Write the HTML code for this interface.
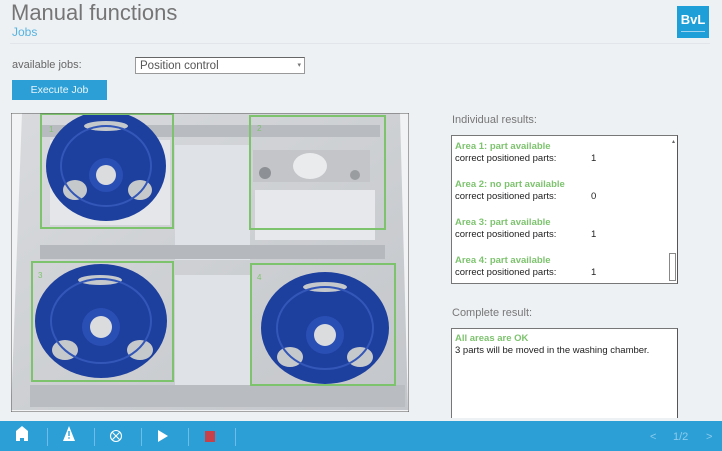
<!DOCTYPE html>
<html><head><meta charset="utf-8"><style>
*{margin:0;padding:0;box-sizing:border-box}
body{width:722px;height:451px;overflow:hidden;background:#eef1f4;font-family:"Liberation Sans",sans-serif;position:relative}
.a{position:absolute}
.t{font-size:22px;color:#757575;left:11px;top:0px}
.j{font-size:12px;color:#56b3e0;left:12px;top:25px}
.hr{left:10px;top:43px;width:700px;height:1px;background:#e2e6ea}
.lbl{font-size:11px;color:#666;}
.sel{left:135px;top:57px;width:170px;height:17px;background:#fff;border:1px solid #999;border-top-color:#666;font-size:11.5px;color:#555;padding:1px 4px;line-height:14px}
.btn{left:12px;top:80px;width:95px;height:20px;background:#2ca0d6;color:#e8f4fb;font-size:10.5px;text-align:center;line-height:20px}
.box{background:#fff;border:1px solid #777;border-right-color:#555;font-size:9.5px;color:#222}
.g{color:#7dc36e;font-weight:bold}
.row{height:12px;line-height:12px;position:relative}
.bar{left:0;top:421px;width:722px;height:30px;background:#2ca0d6}
</style></head><body>
<div class="a t">Manual functions</div>
<div class="a j">Jobs</div>
<div class="a hr"></div>
<div class="a" style="left:677px;top:6px;width:32px;height:32px;background:#1e9fd8;color:#fff;font-weight:bold;font-size:13px;text-align:center;line-height:28px">BvL<div style="position:absolute;left:4px;top:25px;width:24px;height:1px;background:#9fd3ef"></div></div>
<div class="a lbl" style="left:12px;top:59px">available jobs:</div>
<div class="a sel">Position control<span style="position:absolute;right:3px;top:1px;font-size:7px;color:#777">▾</span></div>
<div class="a btn">Execute Job</div>

<svg class="a" style="left:11px;top:113px" width="398" height="299" viewBox="11 113 398 299">
<defs><linearGradient id="m" x1="0" y1="0" x2="1" y2="1"><stop offset="0" stop-color="#d8dadd"/><stop offset="1" stop-color="#c3c6ca"/></linearGradient></defs>
<rect x="11" y="113" width="398" height="299" fill="#f2f3f5"/>
<polygon points="22,113 400,113 408,410 11,410" fill="url(#m)"/>
<rect x="40" y="125" width="340" height="12" fill="#b8bbbf"/>
<rect x="175" y="145" width="75" height="115" fill="#dfe2e6"/>
<rect x="175" y="275" width="75" height="110" fill="#dfe2e6"/>
<rect x="50" y="140" width="120" height="85" fill="#e4e6e9"/>
<rect x="255" y="190" width="120" height="50" fill="#e6e8eb"/>
<rect x="40" y="245" width="345" height="14" fill="#b5b8bc"/>
<rect x="30" y="385" width="375" height="22" fill="#b9bcc0"/>
<rect x="253" y="150" width="117" height="32" fill="#c3c5c8"/>
<circle cx="265" cy="173" r="6" fill="#8d9094"/>
<ellipse cx="310" cy="166" rx="17" ry="13" fill="#e9ebed"/>
<circle cx="355" cy="175" r="5" fill="#9a9da0"/>
<g fill="#1d3f9e">
<ellipse cx="106" cy="166" rx="60" ry="55"/>
<ellipse cx="101" cy="321" rx="66" ry="57"/>
<ellipse cx="325" cy="328" rx="64" ry="56"/>
</g>
<g fill="#c6c9cc">
<ellipse cx="106" cy="126" rx="22" ry="5"/><ellipse cx="75" cy="190" rx="12" ry="10"/><ellipse cx="140" cy="190" rx="12" ry="10"/>
<ellipse cx="100" cy="280" rx="22" ry="5"/><ellipse cx="65" cy="350" rx="13" ry="10"/><ellipse cx="140" cy="350" rx="13" ry="10"/>
<ellipse cx="325" cy="287" rx="22" ry="5"/><ellipse cx="290" cy="357" rx="13" ry="10"/><ellipse cx="360" cy="357" rx="13" ry="10"/>
</g>
<g fill="none" stroke="#3357b8" stroke-width="2"><ellipse cx="106" cy="166" rx="45" ry="40"/><ellipse cx="101" cy="321" rx="50" ry="42"/><ellipse cx="325" cy="328" rx="48" ry="41"/></g>
<g fill="#2a4fb4"><circle cx="106" cy="175" r="17"/><circle cx="101" cy="327" r="19"/><circle cx="325" cy="335" r="19"/></g>
<g fill="#dadcde"><circle cx="106" cy="175" r="10"/><circle cx="101" cy="327" r="11"/><circle cx="325" cy="335" r="11"/></g>
<g fill="none" stroke="#7dc36e" stroke-width="2">
<rect x="41" y="114" width="132" height="114"/>
<rect x="250" y="116" width="135" height="113"/>
<rect x="32" y="262" width="141" height="119"/>
<rect x="251" y="264" width="144" height="121"/>
</g>
<g fill="#7dc36e" font-size="8" font-family="Liberation Sans"><text x="49" y="132">1</text><text x="257" y="131">2</text><text x="38" y="278">3</text><text x="257" y="280">4</text></g>
<rect x="11" y="113" width="398" height="299" fill="none" stroke="#555" stroke-width="1"/>
</svg>

<div class="a lbl" style="left:452px;top:114px;color:#777">Individual results:</div>
<div class="a box" style="left:451px;top:135px;width:227px;height:149px;padding:5px 0 0 3px">
<div class="row g">Area 1: part available</div><div class="row">correct positioned parts:<span class="a" style="left:136px">1</span></div>
<div class="row"></div>
<div class="row g" style="margin-top:2px">Area 2: no part available</div><div class="row">correct positioned parts:<span class="a" style="left:136px">0</span></div>
<div class="row"></div>
<div class="row g" style="margin-top:2px">Area 3: part available</div><div class="row">correct positioned parts:<span class="a" style="left:136px">1</span></div>
<div class="row"></div>
<div class="row g" style="margin-top:2px">Area 4: part available</div><div class="row">correct positioned parts:<span class="a" style="left:136px">1</span></div>
<div class="a" style="right:2px;top:2px;font-size:6px;color:#666">▴</div>
<div class="a" style="right:1px;top:117px;width:7px;height:28px;border:1px solid #888;background:#fff"></div>
</div>
<div class="a lbl" style="left:452px;top:307px;color:#777">Complete result:</div>
<div class="a box" style="left:451px;top:328px;width:227px;height:90px;padding:4px 0 0 3px;border-bottom:none">
<div class="row g">All areas are OK</div><div class="row">3 parts will be moved in the washing chamber.</div>
</div>

<div class="a bar"></div>
<svg class="a" style="left:0;top:421px" width="722" height="30">
<path d="M16 10 L22 5 L28 10 L28 20 L24 20 L24 17 L20 17 L20 20 L16 20Z" fill="#fff"/>
<path d="M69 5 L75 20 L63 20Z" fill="#fff"/><rect x="68.3" y="10" width="1.4" height="5" fill="#2ca0d6"/><rect x="68.3" y="16.3" width="1.4" height="1.4" fill="#2ca0d6"/>
<circle cx="116" cy="15" r="5.5" fill="none" stroke="#fff" stroke-width="1.1"/><path d="M112.5 11.5 L119.5 18.5 M119.5 11.5 L112.5 18.5" stroke="#fff" stroke-width="1.1"/>
<path d="M158 9 L168 15 L158 21Z" fill="#fff"/>
<rect x="205" y="10" width="10" height="11" fill="#c8404a"/>
<g fill="#6ebde6"><rect x="47" y="7" width="1" height="18"/><rect x="94" y="7" width="1" height="18"/><rect x="141" y="7" width="1" height="18"/><rect x="188" y="7" width="1" height="18"/><rect x="235" y="7" width="1" height="18"/></g>
<g fill="#8ccbec" font-family="Liberation Sans" font-size="11"><text x="650" y="19">&lt;</text><text x="673" y="19">1/2</text><text x="706" y="19">&gt;</text></g>
</svg>
</body></html>
